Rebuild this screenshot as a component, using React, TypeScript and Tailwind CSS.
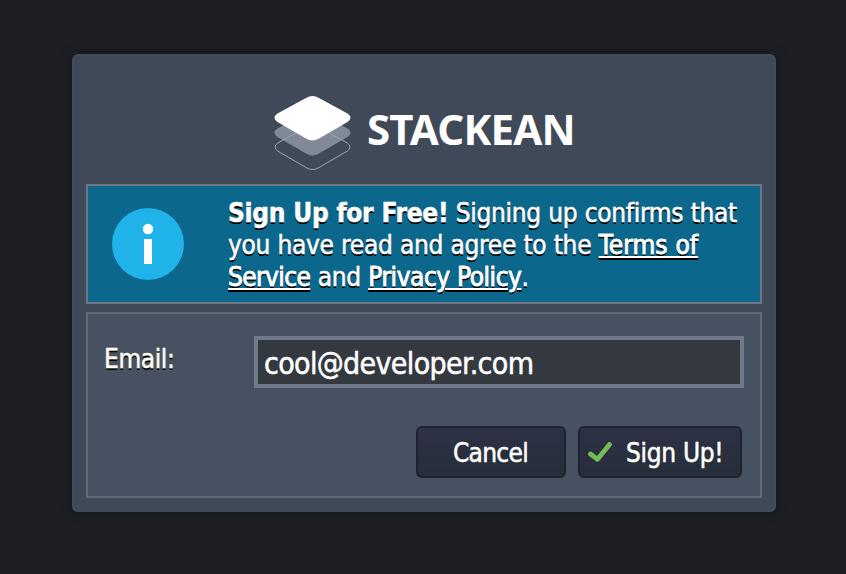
import type { ReactNode } from "react";

const layer = "M3.500 18.500Q-2.500 22.700 3.500 27L32 43.500Q38.500 47.500 45 43.500L73.500 27Q79.500 22.700 73.500 18.500L45 3Q38.500 -1 32 3Z";

function Logo() {
  return (
    <div className="flex h-[76px] items-start">
      <svg className="shrink-0" width="80" height="76" viewBox="0 0 80 76" fill="none">
        <path d={layer} transform="translate(0 15)" fill="#808995" />
        <path d={layer} transform="translate(0.500 29.500) scale(0.987 0.990)" stroke="#a0a7b1" strokeWidth="1" />
        <path d={layer} fill="white" />
      </svg>
      <span className="ml-[13px] mt-[4px] font-['Noto_Sans','Open_Sans',sans-serif] text-[42px] leading-[60px] font-bold tracking-[-0.8px] text-white">STACKEAN</span>
    </div>
  );
}

function Link({ children, spacing = "" }: { children: ReactNode; spacing?: string }) {
  return <a href="#" className={`underline decoration-2 underline-offset-[2px] ${spacing}`}>{children}</a>;
}

export default function App() {
  return (
    <main className="h-[574px] w-[846px] bg-[#1e1f24] pl-[72px] pt-[54px] font-['DejaVu_Sans_Condensed','DejaVu_Sans',sans-serif] text-[26px] text-white">
      <section className="h-[458px] w-[704px] rounded-[6px] border-2 border-[#404b5b] bg-[#404958] px-3 shadow-[0_0_14px_rgba(0,0,0,0.3)]">
        <header className="flex h-[128px] pl-[188px] pt-[39px]">
          <Logo />
        </header>
        <div className="flex h-[120px] border-2 border-[#707888] bg-[#0c678c] pl-6 pt-[11px] [text-shadow:0_2px_0_#000]">
          <svg className="mt-[11px] mr-[44px] shrink-0" width="72" height="72" viewBox="0 0 72 72">
            <circle cx="36" cy="36" r="36" fill="#20b3e9" />
            <circle cx="36" cy="21" r="5.200" fill="white" />
            <path d="M32 31h8v25h-8z" fill="white" />
          </svg>
          <p className="whitespace-nowrap leading-8 tracking-[-0.3px] [word-spacing:0.3px] [-webkit-text-stroke:0.5px_white]">
            <span className="block"><b>Sign Up for Free!</b> <span>Signing up confirms that</span></span>
            <span className="block">you have read and agree to the <Link spacing="tracking-[0.1px]">Terms of</Link></span>
            <span className="block"><Link spacing="tracking-[-0.6px]">Service</Link> and <Link spacing="tracking-[-0.45px]">Privacy Policy</Link>.</span>
          </p>
        </div>
        <form className="mt-2 h-[186px] border-2 border-[#616878] bg-[#485161] pl-4 pr-4 pt-[22px]">
          <div className="flex">
            <label className="w-[150px] pt-[7px] leading-8 tracking-[-0.4px] text-[#fffdf5] [text-shadow:0_2px_0_#000] [-webkit-text-stroke:0.5px_#fffdf5]">Email:</label>
            <input readOnly value="cool@developer.com" className="h-[52px] w-[490px] border-4 border-[#717a8a] bg-[#34393f] px-[6px] pt-[2px] text-[30px] tracking-[-0.65px] outline-none [-webkit-text-stroke:0.5px_white]" />
          </div>
          <div className="mt-[38px] mr-[2px] flex justify-end gap-3 text-[#fffffa] [text-shadow:0_2px_0_#000] [-webkit-text-stroke:0.5px_#fffffa]">
            <button type="button" className="h-[52px] w-[150px] rounded-[6px] border-2 border-[#1e212f] bg-linear-to-b from-[#2d3245] to-[#262d3a] pt-[2px] pr-px tracking-[-0.7px]">Cancel</button>
            <button type="button" className="flex h-[52px] w-[164px] items-center rounded-[6px] border-2 border-[#1e212f] bg-linear-to-b from-[#2d3245] to-[#262d3a] pl-2">
              <svg width="24" height="20" viewBox="0 0 24 20" fill="none"><path d="M2.500 12L9.500 17.300L21.500 2.500" stroke="#72be55" strokeWidth="4.800" strokeLinecap="round" strokeLinejoin="round" /></svg>
              <span className="ml-[14px] pt-[2px] tracking-[-0.3px]">Sign Up!</span>
            </button>
          </div>
        </form>
      </section>
    </main>
  );
}
